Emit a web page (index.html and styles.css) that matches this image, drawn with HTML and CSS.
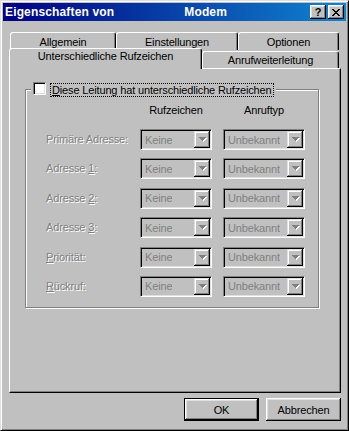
FILE: index.html
```html
<!DOCTYPE html>
<html lang="de">
<head>
<meta charset="utf-8">
<title>Eigenschaften von Modem</title>
<link rel="stylesheet" href="styles.css">
</head>
<body>
<div class="window">
  <div class="titlebar">
    <span class="title">Eigenschaften von</span><span class="title title-name">Modem</span>
    <div class="tb-buttons">
      <span class="tb-btn help">?</span>
      <span class="tb-btn close"><svg width="8" height="7" viewBox="0 0 8 7"><path d="M0 0h2v1h-2zM6 0h2v1h-2zM1 1h2v1h-2zM5 1h2v1h-2zM2 2h4v1h-4zM3 3h2v1h-2zM2 4h4v1h-4zM1 5h2v1h-2zM5 5h2v1h-2zM0 6h2v1h-2zM6 6h2v1h-2z" fill="#000"/></svg></span>
    </div>
  </div>
  <div class="body">
    <div class="tabs">
      <div class="tabrow back">
        <div class="tab w-allg">Allgemein</div>
        <div class="tab w-einst">Einstellungen</div>
        <div class="tab w-opt">Optionen</div>
      </div>
      <div class="tabrow front">
        <div class="tab selected w-unter">Unterschiedliche Rufzeichen</div>
        <div class="tab w-anruf">Anrufweiterleitung</div>
      </div>
    </div>
    <div class="panel">
      <div class="group">
        <div class="legend"><span class="checkbox"></span><span class="focus"><u>D</u>iese Leitung hat unterschiedliche Rufzeichen</span></div>
        <div class="headers"><span class="col-head h1">Rufzeichen</span><span class="col-head h2">Anruftyp</span></div>
        <div class="rows">
          <span class="lbl">Primäre Adresse:</span>
          <div class="combo c1"><span class="val">Keine</span><span class="drop"><svg width="8" height="5" viewBox="0 0 8 5"><path d="M1 1h7v1h-1v1h-1v1h-1v1h-1v-1h-1v-1h-1v-1h-1z" fill="#fff"/><path d="M0 0h7v1h-1v1h-1v1h-1v1h-1v-1h-1v-1h-1v-1h-1z" fill="#808080"/></svg></span></div>
          <div class="combo c2"><span class="val">Unbekannt</span><span class="drop"><svg width="8" height="5" viewBox="0 0 8 5"><path d="M1 1h7v1h-1v1h-1v1h-1v1h-1v-1h-1v-1h-1v-1h-1z" fill="#fff"/><path d="M0 0h7v1h-1v1h-1v1h-1v1h-1v-1h-1v-1h-1v-1h-1z" fill="#808080"/></svg></span></div>

          <span class="lbl">Adresse <u>1</u>:</span>
          <div class="combo c1"><span class="val">Keine</span><span class="drop"><svg width="8" height="5" viewBox="0 0 8 5"><path d="M1 1h7v1h-1v1h-1v1h-1v1h-1v-1h-1v-1h-1v-1h-1z" fill="#fff"/><path d="M0 0h7v1h-1v1h-1v1h-1v1h-1v-1h-1v-1h-1v-1h-1z" fill="#808080"/></svg></span></div>
          <div class="combo c2"><span class="val">Unbekannt</span><span class="drop"><svg width="8" height="5" viewBox="0 0 8 5"><path d="M1 1h7v1h-1v1h-1v1h-1v1h-1v-1h-1v-1h-1v-1h-1z" fill="#fff"/><path d="M0 0h7v1h-1v1h-1v1h-1v1h-1v-1h-1v-1h-1v-1h-1z" fill="#808080"/></svg></span></div>

          <span class="lbl">Adresse <u>2</u>:</span>
          <div class="combo c1"><span class="val">Keine</span><span class="drop"><svg width="8" height="5" viewBox="0 0 8 5"><path d="M1 1h7v1h-1v1h-1v1h-1v1h-1v-1h-1v-1h-1v-1h-1z" fill="#fff"/><path d="M0 0h7v1h-1v1h-1v1h-1v1h-1v-1h-1v-1h-1v-1h-1z" fill="#808080"/></svg></span></div>
          <div class="combo c2"><span class="val">Unbekannt</span><span class="drop"><svg width="8" height="5" viewBox="0 0 8 5"><path d="M1 1h7v1h-1v1h-1v1h-1v1h-1v-1h-1v-1h-1v-1h-1z" fill="#fff"/><path d="M0 0h7v1h-1v1h-1v1h-1v1h-1v-1h-1v-1h-1v-1h-1z" fill="#808080"/></svg></span></div>

          <span class="lbl">Adresse <u>3</u>:</span>
          <div class="combo c1"><span class="val">Keine</span><span class="drop"><svg width="8" height="5" viewBox="0 0 8 5"><path d="M1 1h7v1h-1v1h-1v1h-1v1h-1v-1h-1v-1h-1v-1h-1z" fill="#fff"/><path d="M0 0h7v1h-1v1h-1v1h-1v1h-1v-1h-1v-1h-1v-1h-1z" fill="#808080"/></svg></span></div>
          <div class="combo c2"><span class="val">Unbekannt</span><span class="drop"><svg width="8" height="5" viewBox="0 0 8 5"><path d="M1 1h7v1h-1v1h-1v1h-1v1h-1v-1h-1v-1h-1v-1h-1z" fill="#fff"/><path d="M0 0h7v1h-1v1h-1v1h-1v1h-1v-1h-1v-1h-1v-1h-1z" fill="#808080"/></svg></span></div>

          <span class="lbl"><u>P</u>riorität:</span>
          <div class="combo c1"><span class="val">Keine</span><span class="drop"><svg width="8" height="5" viewBox="0 0 8 5"><path d="M1 1h7v1h-1v1h-1v1h-1v1h-1v-1h-1v-1h-1v-1h-1z" fill="#fff"/><path d="M0 0h7v1h-1v1h-1v1h-1v1h-1v-1h-1v-1h-1v-1h-1z" fill="#808080"/></svg></span></div>
          <div class="combo c2"><span class="val">Unbekannt</span><span class="drop"><svg width="8" height="5" viewBox="0 0 8 5"><path d="M1 1h7v1h-1v1h-1v1h-1v1h-1v-1h-1v-1h-1v-1h-1z" fill="#fff"/><path d="M0 0h7v1h-1v1h-1v1h-1v1h-1v-1h-1v-1h-1v-1h-1z" fill="#808080"/></svg></span></div>

          <span class="lbl"><u>R</u>ückruf:</span>
          <div class="combo c1"><span class="val">Keine</span><span class="drop"><svg width="8" height="5" viewBox="0 0 8 5"><path d="M1 1h7v1h-1v1h-1v1h-1v1h-1v-1h-1v-1h-1v-1h-1z" fill="#fff"/><path d="M0 0h7v1h-1v1h-1v1h-1v1h-1v-1h-1v-1h-1v-1h-1z" fill="#808080"/></svg></span></div>
          <div class="combo c2"><span class="val">Unbekannt</span><span class="drop"><svg width="8" height="5" viewBox="0 0 8 5"><path d="M1 1h7v1h-1v1h-1v1h-1v1h-1v-1h-1v-1h-1v-1h-1z" fill="#fff"/><path d="M0 0h7v1h-1v1h-1v1h-1v1h-1v-1h-1v-1h-1v-1h-1z" fill="#808080"/></svg></span></div>
        </div>
      </div>
    </div>
    <div class="buttons">
      <button class="btn default" type="button">OK</button>
      <button class="btn" type="button">Abbrechen</button>
    </div>
  </div>
</div>
</body>
</html>
```
FILE: styles.css
```css
* { box-sizing: border-box; }
html, body { margin: 0; padding: 0; }
body {
  font-family: "Liberation Sans", Arial, sans-serif;
  font-size: 11px;
  letter-spacing: -0.15px;
  background: #c0c0c0;
  color: #000;
}
u { text-decoration: underline; text-underline-offset: 1px; }

.window {
  width: 349px;
  height: 431px;
  background: #c0c0c0;
  border-top: 1px solid #dfdfdf;
  border-left: 1px solid #dfdfdf;
  border-right: 1px solid #000;
  border-bottom: 1px solid #000;
  box-shadow: inset 1px 1px #fff, inset -1px -1px #808080;
  padding: 2px;
  display: flex;
  flex-direction: column;
}

.titlebar {
  height: 18px;
  background: linear-gradient(to right, #000080, #1084d0);
  display: flex;
  align-items: center;
  color: #fff;
  font-weight: bold;
  font-size: 12px;
  letter-spacing: 0.15px;
  padding-left: 2px;
}
.title-name { margin-left: 70px; }
.tb-buttons {
  margin-left: auto;
  margin-right: 2px;
  display: flex;
  gap: 2px;
}
.tb-btn {
  width: 16px;
  height: 14px;
  background: #c0c0c0;
  box-shadow: inset -1px -1px #000, inset 1px 1px #fff, inset -2px -2px #808080, inset 2px 2px #dfdfdf;
  display: flex;
  align-items: center;
  justify-content: center;
  color: #000;
  font-size: 11px;
  font-weight: bold;
  line-height: 1;
  letter-spacing: 0;
}
.tb-btn svg { display: block; }

.body { padding: 11px 5px 0 6px; }

.tabrow { display: flex; }
.back { height: 18px; padding-left: 1px; }
.front { height: 20px; margin-top: -2px; align-items: flex-end; }

.tab {
  height: 18px;
  background: #c0c0c0;
  border-top: 1px solid #fff;
  border-left: 1px solid #fff;
  border-right: 1px solid #000;
  box-shadow: inset -1px 0 #808080;
  border-radius: 3px 3px 0 0;
  text-align: center;
  line-height: 13px;
  padding-top: 3px;
  white-space: nowrap;
}
.w-allg { width: 106px; }
.w-einst { width: 122px; }
.w-opt { width: 101px; }
.w-unter { width: 193px; }
.w-anruf { width: 137px; height: 17px; padding-top: 2px; }
.tab.selected {
  height: 21px;
  margin-bottom: -1px;
  padding-top: 1px;
  position: relative;
  z-index: 1;
}

.panel {
  height: 325px;
  border-top: 1px solid #fff;
  border-left: 1px solid #fff;
  border-right: 1px solid #000;
  border-bottom: 1px solid #000;
  box-shadow: inset -1px -1px #808080;
  padding-top: 20px;
  padding-left: 15px;
}

.group {
  width: 294px;
  border: 1px solid #808080;
  box-shadow: inset 1px 1px #fff, 1px 1px #fff;
  padding: 0 0 10px 20px;
}

.legend {
  display: flex;
  align-items: flex-start;
  width: fit-content;
  height: 15px;
  margin-top: -8px;
  margin-left: -15px;
  padding: 0 2px;
  background: #c0c0c0;
}
.checkbox {
  width: 13px;
  height: 13px;
  background: #fff;
  border-top: 1px solid #808080;
  border-left: 1px solid #808080;
  border-right: 1px solid #fff;
  border-bottom: 1px solid #fff;
  box-shadow: inset 1px 1px #000, inset -1px -1px #dfdfdf;
}
.focus {
  margin-left: 4px;
  margin-top: 1px;
  border: 1px dotted #000;
  padding: 0 1px;
  line-height: 12px;
  white-space: nowrap;
}

.headers {
  display: flex;
  line-height: 13px;
  margin-top: 7px;
}
.col-head { text-align: center; white-space: nowrap; }
.h1 { margin-left: 94px; width: 72px; }
.h2 { margin-left: 11px; width: 82px; }

.rows {
  display: grid;
  grid-template-columns: 94px 83px 82px;
  grid-auto-rows: 21px;
  row-gap: 8.4px;
  margin-top: 12px;
}
.lbl {
  align-self: center;
  color: #808080;
  text-shadow: 1px 1px 0 #fff;
  white-space: nowrap;
  line-height: 13px;
}
.combo {
  height: 21px;
  display: flex;
  align-items: center;
  background: #c0c0c0;
  border-top: 1px solid #808080;
  border-left: 1px solid #808080;
  border-right: 1px solid #fff;
  border-bottom: 1px solid #fff;
  box-shadow: inset 1px 1px #000, inset -1px -1px #dfdfdf;
  padding: 1px;
}
.combo.c1 { width: 72px; }
.combo.c2 { width: 82px; }
.val {
  color: #808080;
  padding-left: 3px;
  white-space: nowrap;
  overflow: hidden;
}
.drop {
  margin-left: auto;
  width: 16px;
  height: 17px;
  flex: none;
  background: #c0c0c0;
  box-shadow: inset -1px -1px #000, inset 1px 1px #dfdfdf, inset -2px -2px #808080, inset 2px 2px #fff;
  display: flex;
  align-items: center;
  justify-content: center;
}
.drop svg { display: block; margin-left: 1px; }

.buttons {
  display: flex;
  justify-content: flex-end;
  gap: 7px;
  margin-top: 5px;
}
.btn {
  width: 75px;
  height: 23px;
  font-family: "Liberation Sans", Arial, sans-serif;
  font-size: 11px;
  letter-spacing: -0.15px;
  color: #000;
  background: #c0c0c0;
  border: none;
  padding: 0;
  box-shadow: inset -1px -1px #000, inset 1px 1px #fff, inset -2px -2px #808080, inset 2px 2px #dfdfdf;
}
.btn.default {
  border: 1px solid #000;
}
```
